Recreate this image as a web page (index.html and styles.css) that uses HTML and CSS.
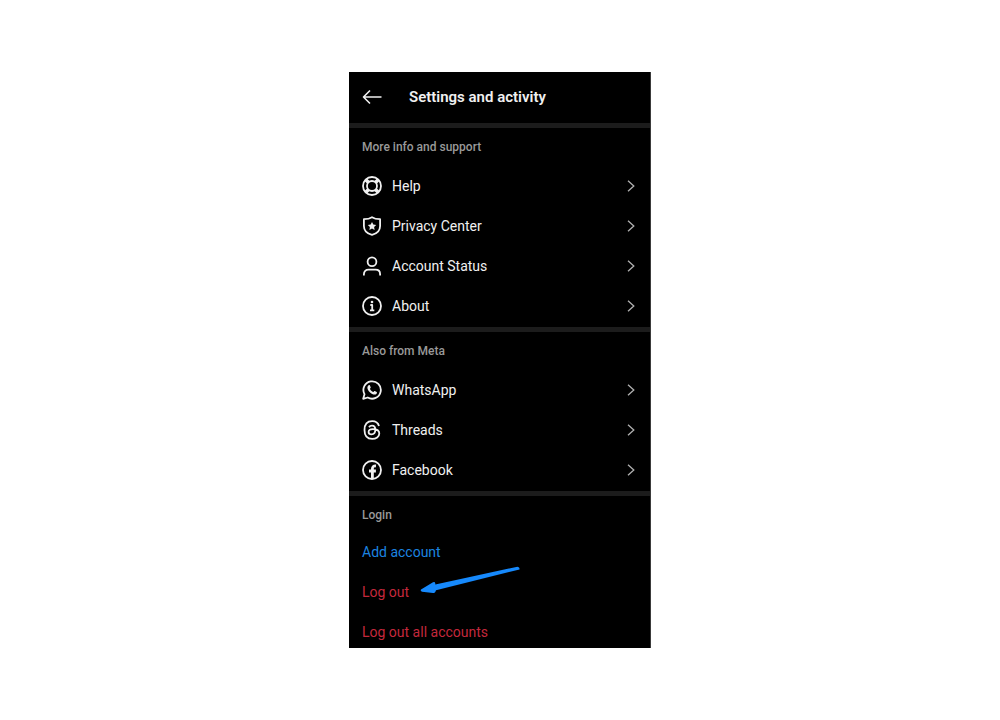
FILE: index.html
```html
<!DOCTYPE html>
<html lang="en">
<head>
<meta charset="utf-8">
<meta name="viewport" content="width=device-width, initial-scale=1">
<title>Settings and activity</title>
<link rel="stylesheet" href="styles.css">
</head>
<body>
<svg class="defs" aria-hidden="true"><symbol id="chevron" viewBox="0 0 8 12"><path d="M1 0.800l5.800 5.200L1 11.200"/></symbol></svg>
<main class="panel">
  <header class="header">
    <button class="back" type="button" aria-label="Back"><svg class="icon" viewBox="0 0 20 20"><path d="M19.500 10H1.500M8 3.500L1.500 10L8 16.500" stroke-width="1.600"/></svg></button>
    <h1 class="title">Settings and activity</h1>
  </header>
  <section class="section">
    <h2 class="section-title">More info and support</h2>
    <nav class="rows" aria-label="More info and support">
      <a class="row" href="#help"><svg class="icon" viewBox="0 0 20 20"><circle cx="10" cy="10" r="9"/><circle cx="10" cy="10" r="5"/><path d="M3.800 3.800L6.800 6.800M16.200 3.800L13.200 6.800M3.800 16.200L6.800 13.200M16.200 16.200L13.200 13.200" stroke-width="3.600"/></svg><span class="label">Help</span><svg class="chevron"><use href="#chevron"/></svg></a>
      <a class="row" href="#privacy"><svg class="icon" viewBox="0 0 20 20"><path d="M10 1.200C7.500 2.900 4.800 3.200 1.900 3.200V10C1.900 15.500 5.600 17.800 10 18.900C14.400 17.800 18.100 15.500 18.100 10V3.200C15.200 3.200 12.500 2.900 10 1.200Z"/><path class="solid" d="M10 5.900l1.300 2.700 2.900.4-2.100 2.100.5 2.900-2.600-1.400-2.600 1.400.5-2.900-2.100-2.100 2.900-.4z"/></svg><span class="label">Privacy Center</span><svg class="chevron"><use href="#chevron"/></svg></a>
      <a class="row" href="#status"><svg class="icon" viewBox="0 0 20 20"><circle cx="10" cy="5.700" r="4.400"/><path d="M1.900 19.500V18.200C1.900 15.500 3.800 13.700 6.500 13.700H13.500C16.200 13.700 18.100 15.500 18.100 18.200V19.500"/></svg><span class="label">Account Status</span><svg class="chevron"><use href="#chevron"/></svg></a>
      <a class="row" href="#about"><svg class="icon" viewBox="0 0 20 20"><circle cx="10" cy="10" r="9"/><path d="M8.300 9H10.200V14M8 14.300H12.300"/><circle class="solid" cx="10" cy="6" r="1.300"/></svg><span class="label">About</span><svg class="chevron"><use href="#chevron"/></svg></a>
    </nav>
  </section>
  <section class="section">
    <h2 class="section-title">Also from Meta</h2>
    <nav class="rows" aria-label="Also from Meta">
      <a class="row" href="#whatsapp"><svg class="icon" viewBox="0 0 20 20"><path d="M1.200 18.800L2.500 14.200A8.700 8.700 0 1 1 5.700 17.500Z"/><path class="solid" d="M6.600 5.300C7.100 4.900 7.700 5 7.900 5.500L8.700 7.300C8.900 7.800 8.100 8.500 8 8.900C8.600 10.300 9.700 11.400 11.300 12C11.800 11.700 12.300 10.800 12.800 11L14.700 11.900C15.200 12.200 14.900 13.300 14.300 13.900C11.700 16.100 5.300 11.400 5.400 7.400C5.400 6.500 5.900 5.800 6.600 5.300Z"/></svg><span class="label">WhatsApp</span><svg class="chevron"><use href="#chevron"/></svg></a>
      <a class="row" href="#threads"><svg class="icon" viewBox="0 0 20 20"><path d="M17 6C16.100 2.800 13.700 1.100 10.200 1.100C5 1.100 2.500 4.500 2.500 10C2.500 15.500 5 18.900 10.200 18.900C14 18.900 17.300 16.700 17.300 13.600C17.300 10.800 14.700 9.100 10.900 9.100C8.200 9.100 6.600 10.200 6.600 11.900C6.600 13.400 7.900 14.300 9.600 14.300C12.100 14.300 13.300 12.700 13.300 9.800C13.300 7.100 12.200 5.700 10 5.700C8.600 5.700 7.600 6.200 7 7.200"/></svg><span class="label">Threads</span><svg class="chevron"><use href="#chevron"/></svg></a>
      <a class="row" href="#facebook"><svg class="icon" viewBox="0 0 20 20"><circle cx="10" cy="10" r="9"/><path d="M10.400 18.500V8.900C10.400 6.600 11.500 5.800 14 6M7 11H13.900" stroke-width="2.800"/></svg><span class="label">Facebook</span><svg class="chevron"><use href="#chevron"/></svg></a>
    </nav>
  </section>
  <section class="section">
    <h2 class="section-title">Login</h2>
    <div class="actions">
      <button class="action add" type="button">Add account</button>
      <button class="action danger" type="button">Log out<svg class="pointer" viewBox="0 0 100 28" aria-hidden="true"><path d="M1 23.500L13 16.300Q15 15.500 15.300 17.500V18.500L97.500 0.700Q100 1 99.500 3.500L16 24.300L15.300 26Q14.500 27.300 13 27L2 25.700Q0 24.700 1 23.500Z"/></svg></button>
      <button class="action danger" type="button">Log out all accounts</button>
    </div>
  </section>
</main>
</body>
</html>
```
FILE: styles.css
```css
* { box-sizing: border-box; }

body {
  margin: 0;
  min-height: 100vh;
  display: flex;
  align-items: center;
  justify-content: center;
  background: #fff;
  font-family: Roboto, "Liberation Sans", sans-serif;
}

.defs { position: absolute; width: 0; height: 0; }

.panel {
  width: 100%;
  max-width: 302px;
  background: #000;
  color: #f0f0f0;
  border-right: 1px solid #3a3a3a;
}

.header {
  display: flex;
  align-items: center;
  gap: 27px;
  padding: 15px 13px 16px;
}

.back {
  display: flex;
  padding: 0;
  border: 0;
  background: none;
  color: inherit;
}

.title {
  margin: 0;
  font-size: 15px;
  font-weight: 600;
  line-height: 20px;
}

.section { border-top: 5px solid #1c1c1c; }

.section-title {
  margin: 0;
  padding: 11px 13px;
  color: #999;
  font-size: 12px;
  font-weight: 500;
  line-height: 16px;
}

.rows { padding-bottom: 1px; }

.row {
  display: flex;
  align-items: center;
  gap: 10px;
  padding: 10px 15px 10px 13px;
  color: inherit;
  font-size: 14px;
  line-height: 20px;
  text-decoration: none;
}

.label { flex: 1; }

.icon {
  width: 20px;
  height: 20px;
  fill: none;
  stroke: currentColor;
  stroke-width: 1.8;
  stroke-linejoin: round;
}

.solid { fill: currentColor; stroke: none; }

.chevron {
  width: 8px;
  height: 12px;
  fill: none;
  stroke: #b0b0b0;
  stroke-width: 1.3;
}

.actions {
  display: flex;
  flex-direction: column;
  align-items: flex-start;
  gap: 24px;
  padding: 10px 13px 8px;
}

.action {
  position: relative;
  padding: 0;
  border: 0;
  background: none;
  font: 14px/16px Roboto, "Liberation Sans", sans-serif;
}

.add { color: #1c84e0; }
.danger { color: #c4283c; }

.pointer {
  position: absolute;
  left: calc(100% + 11px);
  bottom: 6px;
  width: 100px;
  height: 28px;
  fill: #1689fc;
}
```
